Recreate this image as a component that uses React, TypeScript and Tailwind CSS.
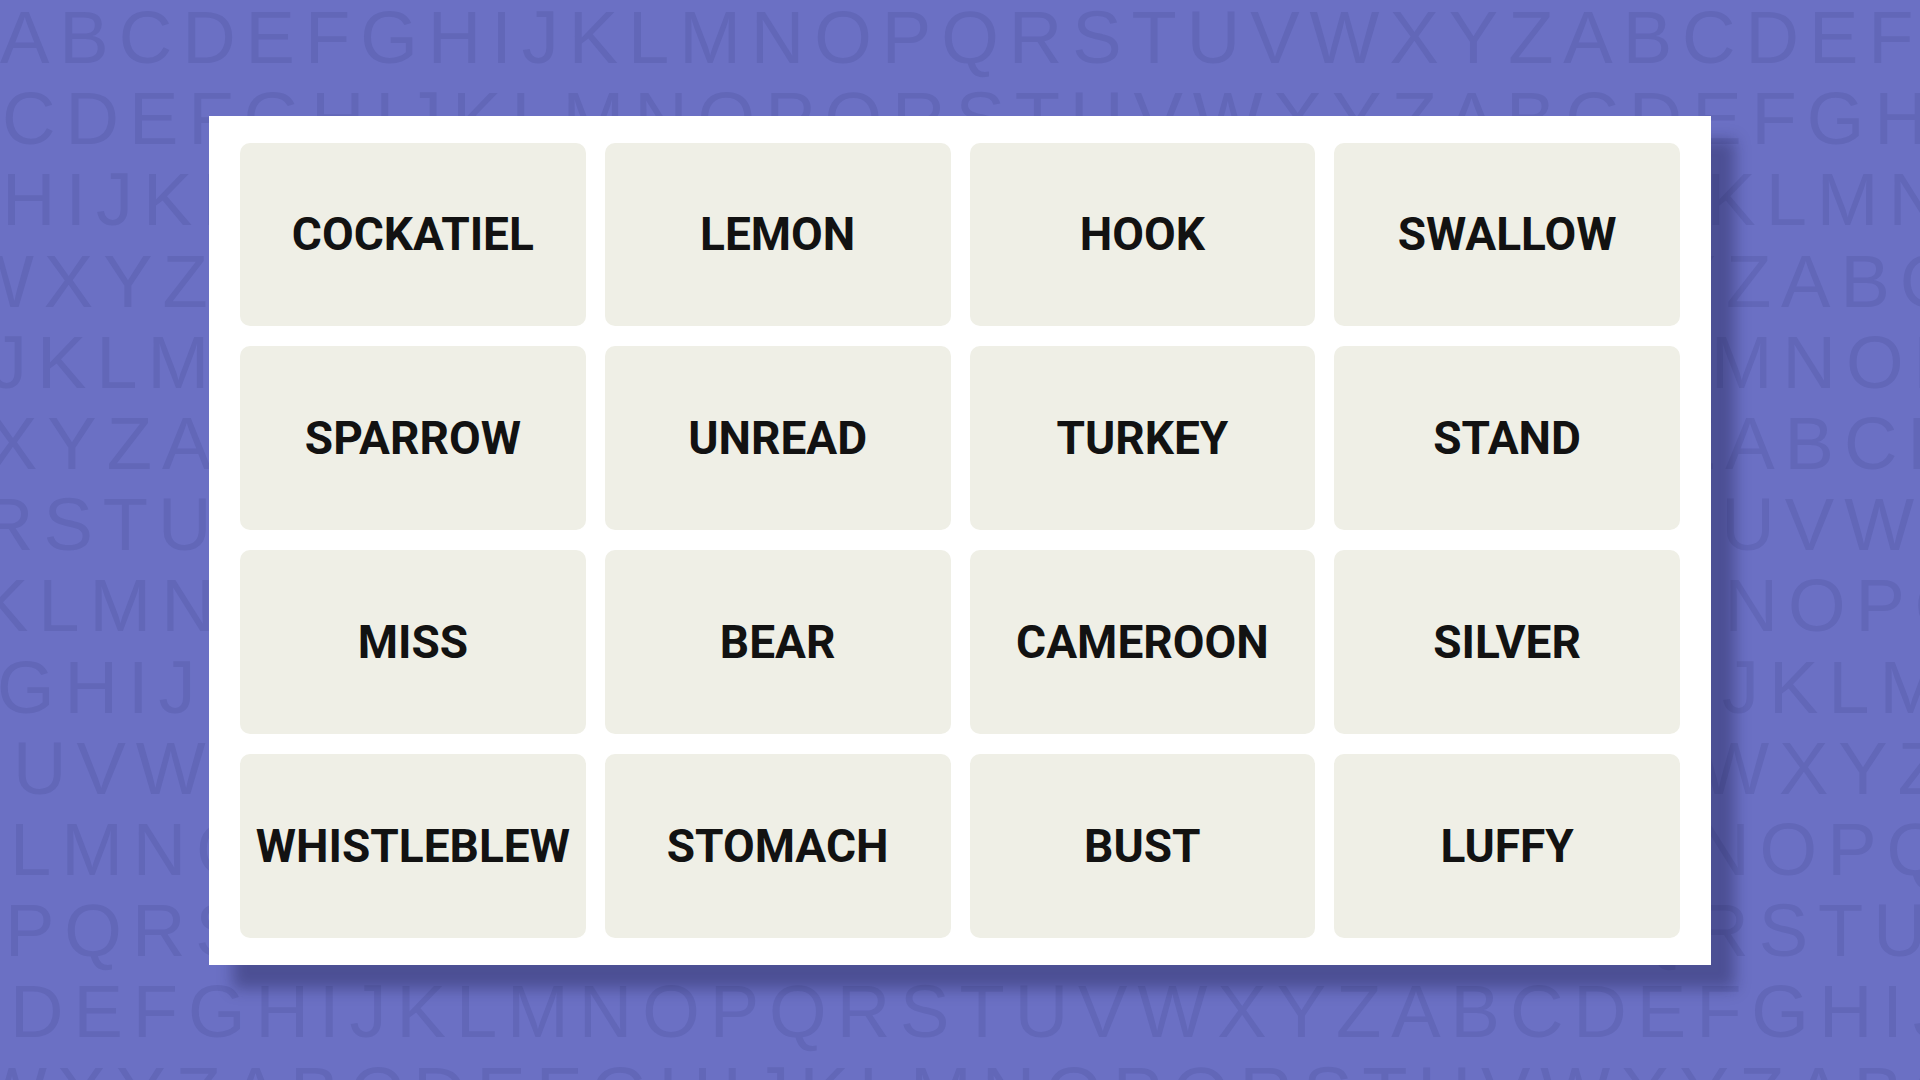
const ALPHABET = "ABCDEFGHIJKLMNOPQRSTUVWXYZ";

// background rows: first letter + how far the row is pushed left/right
const bgRows = [
  { start: "A", cls: "ml-[0px]" },
  { start: "C", cls: "ml-[2px]" },
  { start: "H", cls: "ml-[2px]" },
  { start: "W", cls: "ml-[-36px]" },
  { start: "J", cls: "ml-[-10px]" },
  { start: "X", cls: "ml-[-12px]" },
  { start: "R", cls: "ml-[-20px]" },
  { start: "K", cls: "ml-[-21px]" },
  { start: "G", cls: "ml-[-3px]" },
  { start: "U", cls: "ml-[13px]" },
  { start: "L", cls: "ml-[10px]" },
  { start: "P", cls: "ml-[5px]" },
  { start: "D", cls: "ml-[10px]" },
  { start: "W", cls: "ml-[-23px]" },
];

const words = [
  "COCKATIEL",
  "LEMON",
  "HOOK",
  "SWALLOW",
  "SPARROW",
  "UNREAD",
  "TURKEY",
  "STAND",
  "MISS",
  "BEAR",
  "CAMEROON",
  "SILVER",
  "WHISTLEBLEW",
  "STOMACH",
  "BUST",
  "LUFFY",
];

function rowText(start: string) {
  const idx = ALPHABET.indexOf(start);
  let out = "";
  for (let i = 0; i < 40; i++) {
    out += ALPHABET[(idx + i) % 26];
  }
  return out;
}

function LetterBackground() {
  return (
    <div className="col-start-1 row-start-1 mt-[-3px] flex flex-col overflow-hidden font-['Liberation_Sans',Arial,sans-serif] text-[74px] leading-[81.2px] tracking-[10px] text-[#6267b8] select-none">
      {bgRows.map((row, i) => (
        <div key={i} className={`whitespace-nowrap ${row.cls}`}>
          {rowText(row.start)}
        </div>
      ))}
    </div>
  );
}

function Tile({ word }: { word: string }) {
  return (
    <div className="flex items-center justify-center rounded-[10px] bg-[#efefe6]">
      <span className="font-['Roboto',sans-serif] text-[46px] leading-none font-bold text-[#121212]">
        {word}
      </span>
    </div>
  );
}

export default function App() {
  return (
    <div className="grid h-[1080px] w-full overflow-hidden bg-[#6b70c4]">
      <LetterBackground />

      <div className="col-start-1 row-start-1 flex items-center justify-center">
        <div className="grid h-[849px] w-[1502px] grid-cols-4 grid-rows-4 gap-x-[19px] gap-y-[20px] bg-white px-[31px] py-[27px] shadow-[24px_24px_14px_rgba(20,20,60,0.35)]">
          {words.map((w) => (
            <Tile key={w} word={w} />
          ))}
        </div>
      </div>
    </div>
  );
}
